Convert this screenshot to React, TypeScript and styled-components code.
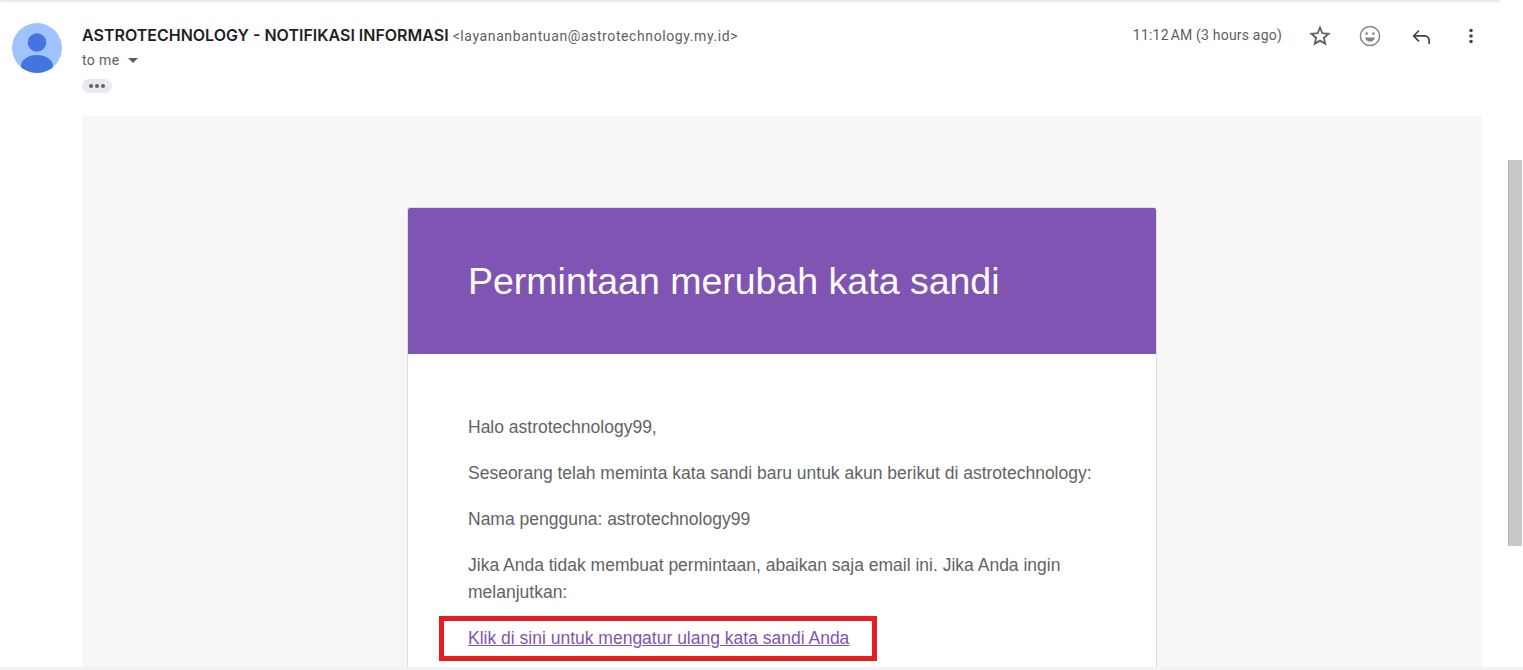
import React from 'react';
import styled, { createGlobalStyle } from 'styled-components';

const GlobalStyle = createGlobalStyle`
  html, body {
    margin: 0;
    padding: 0;
    height: 670px;
    overflow: hidden;
    background: #fff;
  }
`;

function Star() {
  return (
    <svg width="24" height="24" viewBox="0 0 24 24" fill="#5f6368">
      <path d="M22.800 9.100l-7.800-.66L12 1.300 9 8.440l-7.800.66 5.920 5.120L5.340 21.800 12 17.800l6.660 4-1.780-7.580 5.920-5.120zM12 15.500l-3.860 2.330 1.020-4.390-3.400-2.950 4.490-.39L12 5.960l1.750 4.140 4.490.39-3.400 2.950 1.020 4.390L12 15.500z" />
    </svg>
  );
}

function Smile() {
  return (
    <svg width="24" height="24" viewBox="0 0 24 24" fill="none">
      <circle cx="12" cy="12" r="9.600" stroke="#80868b" strokeWidth="1.500" />
      <circle cx="8.600" cy="9.600" r="1.300" fill="#80868b" />
      <circle cx="15.400" cy="9.600" r="1.300" fill="#80868b" />
      <path d="M7 13.400h10c-.5 2.600-2.600 4.200-5 4.200s-4.500-1.600-5-4.200z" fill="#80868b" />
    </svg>
  );
}

function Reply() {
  return (
    <svg width="24" height="24" viewBox="0 0 24 24" fill="#444746">
      <path d="M21 20h-1.700v-3.300c0-2.400-1.600-4-4-4H6.600l4 4-1.200 1.200-6-6 6-6 1.200 1.200-4 4h8.700c3.300 0 5.700 2.300 5.700 5.600V20z" />
    </svg>
  );
}

function More() {
  return (
    <svg width="24" height="24" viewBox="0 0 24 24" fill="#444746">
      <circle cx="12" cy="6.500" r="1.800" />
      <circle cx="12" cy="12" r="1.800" />
      <circle cx="12" cy="17.500" r="1.800" />
    </svg>
  );
}

function Avatar() {
  return (
    <svg width="50" height="50" viewBox="0 0 50 50">
      <defs>
        <clipPath id="avatar-clip">
          <circle cx="25" cy="25" r="25" />
        </clipPath>
      </defs>
      <g clipPath="url(#avatar-clip)">
        <rect width="50" height="50" fill="#a0c3ff" />
        <circle cx="25" cy="19.500" r="9.300" fill="#4374e0" />
        <ellipse cx="25" cy="43" rx="16" ry="11" fill="#4374e0" />
      </g>
    </svg>
  );
}

export default function App() {
  return (
    <>
      <GlobalStyle />
      <Styled.Root>
        <Styled.TopShadow />
        <Styled.Header>
          <Avatar />
          <Styled.Meta>
            <Styled.SenderRow>
              <Styled.SenderName>ASTROTECHNOLOGY - NOTIFIKASI INFORMASI</Styled.SenderName>
              <Styled.SenderMail>&lt;layananbantuan@astrotechnology.my.id&gt;</Styled.SenderMail>
            </Styled.SenderRow>
            <Styled.ToRow>
              to me
              <Styled.Caret />
            </Styled.ToRow>
            <Styled.Ellipsis>
              <Styled.Dot />
              <Styled.Dot />
              <Styled.Dot />
            </Styled.Ellipsis>
          </Styled.Meta>
          <Styled.Time>11:12{'\u202f'}AM (3 hours ago)</Styled.Time>
          <Styled.Actions>
            <Star />
            <Smile />
            <Reply />
            <More />
          </Styled.Actions>
        </Styled.Header>
        <Styled.Mail>
          <Styled.Card>
            <Styled.Banner>
              <Styled.Title>Permintaan merubah kata sandi</Styled.Title>
            </Styled.Banner>
            <Styled.Body>
              <Styled.Para>Halo astrotechnology99,</Styled.Para>
              <Styled.Para>Seseorang telah meminta kata sandi baru untuk akun berikut di astrotechnology:</Styled.Para>
              <Styled.Para>Nama pengguna: astrotechnology99</Styled.Para>
              <Styled.Para>Jika Anda tidak membuat permintaan, abaikan saja email ini. Jika Anda ingin melanjutkan:</Styled.Para>
              <Styled.Highlight>
                <Styled.ResetLink href="#">Klik di sini untuk mengatur ulang kata sandi Anda</Styled.ResetLink>
              </Styled.Highlight>
            </Styled.Body>
          </Styled.Card>
        </Styled.Mail>
        <Styled.ScrollThumb />
        <Styled.BottomShadow />
      </Styled.Root>
    </>
  );
}

const Styled = {
  Root: styled.div`
    position: relative;
    width: 1523px;
    height: 670px;
    overflow: hidden;
    background: #fff;
  `,
  TopShadow: styled.div`
    position: absolute;
    top: 0;
    left: 0;
    width: 1500px;
    height: 1px;
    background: #e6e6e6;
    box-shadow: 0 1px 2px rgba(60, 64, 67, 0.15);
  `,
  Header: styled.header`
    display: flex;
    align-items: flex-start;
    height: 116px;
    box-sizing: border-box;
    padding: 23px 40px 0 12px;
  `,
  Meta: styled.div`
    flex: 1;
    margin-left: 20px;
    display: flex;
    flex-direction: column;
    align-items: flex-start;
  `,
  SenderRow: styled.div`
    display: flex;
    align-items: baseline;
    height: 24px;
  `,
  SenderName: styled.span`
    font-family: Inter, 'Liberation Sans', sans-serif;
    font-weight: 600;
    font-size: 16px;
    line-height: 24px;
    color: #1f1f1f;
  `,
  SenderMail: styled.span`
    margin-left: 4px;
    font-family: Roboto, 'Liberation Sans', sans-serif;
    font-size: 14px;
    letter-spacing: 0.6px;
    color: #5e5e5e;
  `,
  ToRow: styled.div`
    display: flex;
    align-items: center;
    margin-top: 2px;
    height: 22px;
    font-family: Roboto, 'Liberation Sans', sans-serif;
    font-size: 14px;
    letter-spacing: 0.4px;
    color: #5e5e5e;
  `,
  Caret: styled.span`
    margin-left: 8px;
    width: 0;
    height: 0;
    border-left: 5.500px solid transparent;
    border-right: 5.500px solid transparent;
    border-top: 5px solid #5e5e5e;
  `,
  Ellipsis: styled.div`
    display: flex;
    align-items: center;
    justify-content: center;
    gap: 2px;
    margin-top: 8px;
    width: 30px;
    height: 14px;
    border-radius: 7px;
    background: #e8eaed;
  `,
  Dot: styled.span`
    width: 4px;
    height: 4px;
    border-radius: 50%;
    background: #5f6368;
  `,
  Time: styled.div`
    margin-top: 2px;
    font-family: Roboto, 'Liberation Sans', sans-serif;
    font-size: 14px;
    line-height: 20px;
    letter-spacing: 0.2px;
    color: #5e5e5e;
  `,
  Actions: styled.div`
    display: flex;
    gap: 26.330px;
    margin-left: 26px;
    margin-top: 1px;
  `,
  Mail: styled.main`
    width: 1400px;
    height: 554px;
    margin-left: 82px;
    padding-top: 91px;
    box-sizing: border-box;
    background: #f7f7f7;
    overflow: hidden;
  `,
  Card: styled.div`
    width: 750px;
    height: 600px;
    margin: 0 auto;
    box-sizing: border-box;
    background: #fff;
    border: 1px solid #dedede;
    border-radius: 3px;
  `,
  Banner: styled.div`
    height: 146px;
    padding: 0 60px;
    display: flex;
    align-items: center;
    background: #7f54b3;
    border-radius: 2px 2px 0 0;
  `,
  Title: styled.h1`
    margin: 0;
    font-family: 'Liberation Sans', Arial, sans-serif;
    font-weight: 400;
    font-size: 37.500px;
    color: #fff;
  `,
  Body: styled.div`
    padding: 60px 60px 0;
  `,
  Para: styled.p`
    margin: 0 0 19px;
    font-family: 'Liberation Sans', Arial, sans-serif;
    font-size: 17.500px;
    line-height: 27px;
    color: #636363;
  `,
  Highlight: styled.div`
    position: relative;
    font-family: 'Liberation Sans', Arial, sans-serif;
    font-size: 17.500px;
    line-height: 27px;

    &::before {
      content: '';
      position: absolute;
      left: -29px;
      top: -9px;
      width: 438px;
      height: 45px;
      box-sizing: border-box;
      border: 5px solid #e61c1f;
    }
  `,
  ResetLink: styled.a`
    position: relative;
    color: #7f54b3;
    text-decoration: underline;
  `,
  ScrollThumb: styled.div`
    position: absolute;
    left: 1508px;
    top: 160px;
    width: 14px;
    height: 386px;
    background: #c9c9c9;
    border-left: 1px solid #b0b0b0;
    box-sizing: border-box;
  `,
  BottomShadow: styled.div`
    position: absolute;
    left: 0;
    right: 0;
    bottom: 0;
    height: 3px;
    background: #f2f2f2;
  `,
};
